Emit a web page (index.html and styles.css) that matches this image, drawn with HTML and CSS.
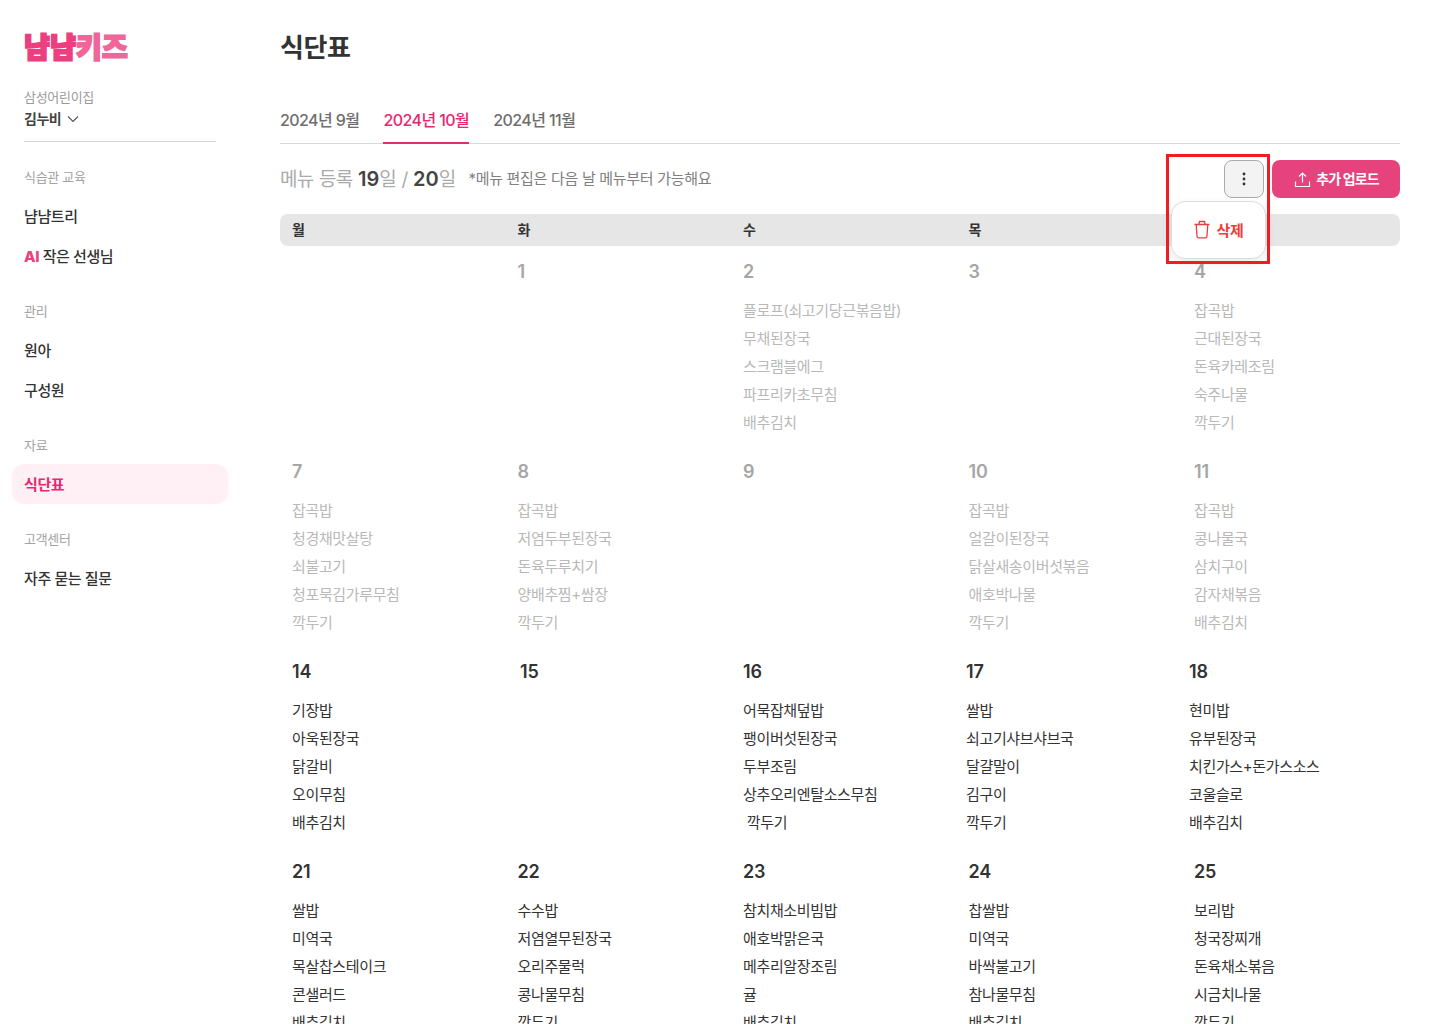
FILE: index.html
```html
<!DOCTYPE html>
<html lang="ko">
<head>
<meta charset="utf-8">
<title>식단표</title>
<link rel="stylesheet" href="styles.css">
</head>
<body>
<div class="app">
  <aside class="sidebar">
    <div class="logo"><span class="logo-a">냠냠</span><span class="logo-b">키즈</span></div>
    <div class="school">삼성어린이집</div>
    <div class="klass">김누비
      <svg class="chev" width="12" height="8" viewBox="0 0 12 8"><path d="M1 1.5 6 6.5 11 1.5" fill="none" stroke="#555" stroke-width="1.1"/></svg>
    </div>
    <div class="side-rule"></div>
    <nav class="groups">
      <div class="group">
        <div class="group-label">식습관 교육</div>
        <a class="nav">냠냠트리</a>
        <a class="nav"><b class="ai">AI</b> 작은 선생님</a>
      </div>
      <div class="group">
        <div class="group-label">관리</div>
        <a class="nav">원아</a>
        <a class="nav">구성원</a>
      </div>
      <div class="group">
        <div class="group-label">자료</div>
        <a class="nav nav-active">식단표</a>
      </div>
      <div class="group">
        <div class="group-label">고객센터</div>
        <a class="nav">자주 묻는 질문</a>
      </div>
    </nav>
  </aside>
  <main class="main">
    <h1 class="title">식단표</h1>
    <div class="tabs">
      <a class="tab">2024년 9월</a>
      <a class="tab tab-active">2024년 10월</a>
      <a class="tab">2024년 11월</a>
    </div>
    <div class="toolbar">
      <div class="summary">메뉴 등록 <b>19</b>일 / <b>20</b>일</div>
      <div class="note">*메뉴 편집은 다음 날 메뉴부터 가능해요</div>
      <div class="actions">
        <button class="kebab" aria-label="더보기">
          <svg width="4" height="14" viewBox="0 0 4 14"><circle cx="2" cy="2" r="1.4" fill="#333"/><circle cx="2" cy="7" r="1.4" fill="#333"/><circle cx="2" cy="12" r="1.4" fill="#333"/></svg>
        </button>
        <button class="upload">
          <svg width="17" height="17" viewBox="0 0 17 17"><path d="M8.5 11.5V2.2M5 5.5l3.5-3.5L12 5.5M1.5 10.5v5h14v-5" fill="none" stroke="#fff" stroke-width="1.2"/></svg>
          <span class="upload-label">추가 업로드</span>
        </button>
        <div class="popup">
          <svg width="18" height="19" viewBox="0 0 18 19"><path d="M1.5 4.5h15M3.2 4.5l.9 12.2a1.3 1.3 0 0 0 1.3 1.2h7.2a1.3 1.3 0 0 0 1.3-1.2l.9-12.2M5.8 4.5 6.5 1.5h5l.7 3" fill="none" stroke="#ee3d3d" stroke-width="1.3"/></svg>
          <span>삭제</span>
        </div>
        <div class="annot"></div>
      </div>
    </div>
    <div class="week-head">
      <div>월</div><div>화</div><div>수</div><div>목</div><div>금</div>
    </div>
    <section class="week past">
      <div class="day"></div>
      <div class="day"><div class="date">1</div></div>
      <div class="day"><div class="date">2</div><ul class="menu"><li>플로프(쇠고기당근볶음밥)</li><li>무채된장국</li><li>스크램블에그</li><li>파프리카초무침</li><li>배추김치</li></ul></div>
      <div class="day"><div class="date">3</div></div>
      <div class="day"><div class="date">4</div><ul class="menu"><li>잡곡밥</li><li>근대된장국</li><li>돈육카레조림</li><li>숙주나물</li><li>깍두기</li></ul></div>
    </section>
    <section class="week past">
      <div class="day"><div class="date">7</div><ul class="menu"><li>잡곡밥</li><li>청경채맛살탕</li><li>쇠불고기</li><li>청포묵김가루무침</li><li>깍두기</li></ul></div>
      <div class="day"><div class="date">8</div><ul class="menu"><li>잡곡밥</li><li>저염두부된장국</li><li>돈육두루치기</li><li>양배추찜+쌈장</li><li>깍두기</li></ul></div>
      <div class="day"><div class="date">9</div></div>
      <div class="day"><div class="date">10</div><ul class="menu"><li>잡곡밥</li><li>얼갈이된장국</li><li>닭살새송이버섯볶음</li><li>애호박나물</li><li>깍두기</li></ul></div>
      <div class="day"><div class="date">11</div><ul class="menu"><li>잡곡밥</li><li>콩나물국</li><li>삼치구이</li><li>감자채볶음</li><li>배추김치</li></ul></div>
    </section>
    <section class="week week-narrow">
      <div class="day"><div class="date">14</div><ul class="menu"><li>기장밥</li><li>아욱된장국</li><li>닭갈비</li><li>오이무침</li><li>배추김치</li></ul></div>
      <div class="day"><div class="date">15</div></div>
      <div class="day"><div class="date">16</div><ul class="menu"><li>어묵잡채덮밥</li><li>팽이버섯된장국</li><li>두부조림</li><li>상추오리엔탈소스무침</li><li>&nbsp;깍두기</li></ul></div>
      <div class="day"><div class="date">17</div><ul class="menu"><li>쌀밥</li><li>쇠고기샤브샤브국</li><li>달걀말이</li><li>김구이</li><li>깍두기</li></ul></div>
      <div class="day"><div class="date">18</div><ul class="menu"><li>현미밥</li><li>유부된장국</li><li>치킨가스+돈가스소스</li><li>코울슬로</li><li>배추김치</li></ul></div>
    </section>
    <section class="week">
      <div class="day"><div class="date">21</div><ul class="menu"><li>쌀밥</li><li>미역국</li><li>목살찹스테이크</li><li>콘샐러드</li><li>배추김치</li></ul></div>
      <div class="day"><div class="date">22</div><ul class="menu"><li>수수밥</li><li>저염열무된장국</li><li>오리주물럭</li><li>콩나물무침</li><li>깍두기</li></ul></div>
      <div class="day"><div class="date">23</div><ul class="menu"><li>참치채소비빔밥</li><li>애호박맑은국</li><li>메추리알장조림</li><li>귤</li><li>배추김치</li></ul></div>
      <div class="day"><div class="date">24</div><ul class="menu"><li>찹쌀밥</li><li>미역국</li><li>바싹불고기</li><li>참나물무침</li><li>배추김치</li></ul></div>
      <div class="day"><div class="date">25</div><ul class="menu"><li>보리밥</li><li>청국장찌개</li><li>돈육채소볶음</li><li>시금치나물</li><li>깍두기</li></ul></div>
    </section>
  </main>
</div>
</body>
</html>
```
FILE: styles.css
```css
* { box-sizing: border-box; }
html, body { margin: 0; height: 1024px; overflow: hidden; background: #fff; }
body { font-family: Inter, "Noto Sans CJK KR", sans-serif; color: #222; }
.app { display: flex; height: 1024px; overflow: hidden; }

.sidebar { width: 240px; flex: none; padding: 27px 12px 0; }
.logo { height: 38px; padding-left: 12px; font-family: "Noto Sans CJK KR", sans-serif; font-weight: 900; font-size: 28px; line-height: 38px; letter-spacing: 0.2px; -webkit-text-stroke: 1.9px currentColor; white-space: nowrap; }
.logo-a { color: #ea4080; }
.logo-b { color: #f0669b; }
.school { margin: 22px 0 0 12px; font-size: 13px; line-height: 20px; color: #999; letter-spacing: -0.3px; }
.klass { margin: 2px 0 0 12px; font-size: 14px; line-height: 20px; font-weight: 600; color: #444; letter-spacing: -0.5px; display: flex; align-items: center; gap: 6px; }
.chev { display: block; }
.side-rule { height: 1px; margin: 12px 12px 0; background: #d4d4d4; }
.groups { margin-top: 25px; display: flex; flex-direction: column; gap: 25px; }
.group-label { margin: 0 0 9px 12px; font-size: 13px; line-height: 20px; height: 20px; color: #a3a3a3; letter-spacing: -0.3px; }
.nav { display: block; height: 40px; padding-left: 12px; font-size: 15px; line-height: 42px; font-weight: 500; color: #333; letter-spacing: -0.4px; border-radius: 12px; }
.nav-active { background: #fff0f5; color: #e8286f; font-weight: 700; }
.ai { color: #ea4080; font-weight: 800; }

.main { flex: 1; min-width: 0; padding: 0 40px; }
.title { margin: 29px 0 0; font-size: 26px; line-height: 38px; font-weight: 700; color: #333; letter-spacing: -0.4px; }
.tabs { display: flex; gap: 24px; margin-top: 30px; border-bottom: 1.5px solid #d9d9d9; height: 47px; }
.tab { height: 47px; padding-top: 11px; font-size: 16px; line-height: 24px; font-weight: 500; color: #6e6e6e; letter-spacing: -0.58px; }
.tab-active { color: #e8286f; border-bottom: 2px solid #e8286f; }
.toolbar { display: flex; align-items: center; height: 38px; margin-top: 16px; }
.summary { font-size: 19px; line-height: 40px; color: #aaa; letter-spacing: -0.7px; word-spacing: 0.8px; }
.summary b { color: #444; font-size: 20px; font-weight: 600; letter-spacing: 0; }
.note { margin-left: 13px; font-size: 15px; line-height: 38px; color: #808080; letter-spacing: -0.31px; }
.actions { position: relative; margin-left: auto; display: flex; gap: 8px; }
.kebab { width: 40px; height: 38px; padding: 0; background: #f3f3f3; border: 1px solid #ababab; border-radius: 8px; display: flex; align-items: center; justify-content: center; }
.upload { width: 128px; height: 38px; padding: 0 0 0 1px; background: #e6427c; border: 0; border-radius: 8px; color: #fff; font: 600 14px Inter, "Noto Sans CJK KR", sans-serif; letter-spacing: -0.9px; display: flex; align-items: center; justify-content: center; gap: 5px; }
.upload-label { position: relative; top: -1px; }
.popup { position: absolute; left: -53px; top: 41px; width: 95px; height: 58px; padding-bottom: 2px; background: #fff; border: 1px solid #dcdcdc; border-radius: 14px; box-shadow: 0 4px 12px rgba(0,0,0,.08); display: flex; align-items: center; justify-content: center; gap: 5px; color: #ee3d3d; font-size: 15px; font-weight: 600; letter-spacing: -0.3px; z-index: 2; }
.annot { position: absolute; left: -58px; top: -6px; width: 104px; height: 110px; border: 3px solid #ee1c25; z-index: 3; }
.week-head { display: grid; grid-template-columns: repeat(4, 225.5px) 1fr; height: 32px; margin-top: 16px; padding-left: 12px; background: #e6e6e6; border-radius: 8px; font-size: 14px; line-height: 32px; font-weight: 600; color: #333; }
.week { display: grid; grid-template-columns: repeat(4, 225.5px) 1fr; height: 200px; padding: 12px 0 0 12px; }
.week-narrow { grid-template-columns: 228px 223px 223px 223px 1fr; }
.date { font-size: 18px; line-height: 28px; font-weight: 600; color: #333; letter-spacing: -0.2px; }
.menu { list-style: none; margin: 11px 0 0; padding: 0; font-size: 15px; line-height: 28px; color: #333; letter-spacing: -0.36px; white-space: nowrap; }
.past .date { color: #a6a6a6; }
.past .menu { color: #b9b9b9; }
```
